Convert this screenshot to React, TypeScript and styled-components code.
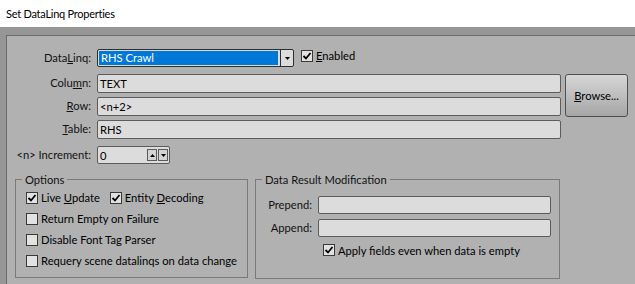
import styled, { createGlobalStyle } from 'styled-components';

const GlobalStyle = createGlobalStyle`
  body {
    margin: 0;
    font-family: Lato, "Liberation Sans", sans-serif;
    font-size: 11.2px;
    color: #000;
  }
`;

const Window = styled.div`
  width: 635px;
  height: 284px;
  display: flex;
  flex-direction: column;
  overflow: hidden;
  background: #fff;
`;

const TitleBar = styled.div`
  height: 27px;
  flex-shrink: 0;
  display: flex;
  align-items: center;
  padding-left: 6px;
  font-size: 11px;
  letter-spacing: -0.25px;
`;

const Frame = styled.div`
  flex: 1;
  display: flex;
  background: #969696;
  padding: 8px 0 0 6px;
`;

const Panel = styled.div`
  flex: 1;
  background: #b1b1b1;
  border-top: 1px solid #6c6c6c;
  border-left: 1px solid #6c6c6c;
  padding-top: 13px;
`;

const Form = styled.div`
  display: grid;
  grid-template-columns: 90px 464px 67px;
  grid-template-rows: 21px 19px 19px 22px 18px;
  row-gap: 4px;
`;

const Label = styled.label`
  text-align: right;
  padding-right: 6px;
  line-height: 18px;
  white-space: nowrap;
  color: #111;
`;

const Key = styled.span`
  text-decoration: underline;
`;

const ComboRow = styled.div`
  display: flex;
  align-items: flex-start;
  gap: 7px;
`;

const Combo = styled.div`
  width: 197px;
  height: 18px;
  box-sizing: border-box;
  border: 1px solid #2e2e2e;
  border-radius: 2px;
  background: #dcdcdc;
  display: flex;
  align-items: stretch;
`;

const Selection = styled.div`
  flex: 1;
  margin: 1px 2px 1px 1px;
  background: #0078d7;
  color: #fff;
  padding-left: 2px;
  line-height: 14px;
`;

const DropButton = styled.div`
  width: 12px;
  border-left: 1px solid #2e2e2e;
  display: flex;
  align-items: center;
  justify-content: center;
`;

const TextBox = styled.div<{ $width?: number; $height?: number }>`
  box-sizing: border-box;
  height: ${(p) => p.$height ?? 19}px;
  width: ${(p) => (p.$width ? `${p.$width}px` : '100%')};
  background: #dcdcdc;
  border: 1px solid #5c5c5c;
  border-radius: 2px;
  padding-left: 2px;
  display: flex;
  align-items: center;
  justify-content: space-between;
`;

const BrowseButton = styled.button`
  grid-column: 3;
  grid-row: 2 / 4;
  margin-left: 4px;
  width: 63px;
  height: 43px;
  font: inherit;
  color: #000;
  border: 1px solid #4f4f4f;
  border-radius: 3px;
  background: linear-gradient(#d6d6d6, #a6a6a6);
  padding: 0;
`;

const Spinner = styled.div`
  display: flex;
  gap: 1px;
  margin-right: 1px;
`;

const SpinButton = styled.div`
  width: 10px;
  height: 12px;
  box-sizing: border-box;
  border: 1px solid #5a5a5a;
  background: #d4d4d4;
  display: flex;
  align-items: center;
  justify-content: center;
`;

const Groups = styled.div`
  display: flex;
  gap: 7px;
  padding-left: 8px;
  margin-top: 8px;
`;

const Group = styled.fieldset<{ $width: number; $height: number }>`
  margin: 0;
  padding: 0;
  box-sizing: border-box;
  width: ${(p) => p.$width}px;
  height: ${(p) => p.$height}px;
  border: 1px solid #7a7a7a;
  min-width: 0;
`;

const Legend = styled.legend`
  margin-left: 6px;
  padding: 0 3px;
  line-height: 15px;
  color: #111;
`;

const OptionList = styled.div`
  padding-left: 10px;
  display: flex;
  flex-direction: column;
`;

const OptionRow = styled.div`
  height: 21px;
  display: flex;
  align-items: center;
  gap: 10px;
`;

const Check = styled.span`
  display: inline-flex;
  align-items: center;
  gap: 3px;
  white-space: nowrap;
`;

const Box = styled.span`
  width: 12px;
  height: 12px;
  box-sizing: border-box;
  border: 1px solid #3a3a3a;
  background: #e2e2e2;
  display: inline-flex;
  align-items: center;
  justify-content: center;
`;

const ModGrid = styled.div`
  display: grid;
  grid-template-columns: 62px 233px;
  grid-auto-rows: 18px;
  row-gap: 5px;
  padding-top: 9px;
`;

const ApplyRow = styled.div`
  grid-column: 2;
  padding-left: 5px;
  display: flex;
  align-items: center;
  height: 18px;
  margin-top: -1px;
`;

const Tick = () => (
  <svg width="10" height="10" viewBox="0 0 10 10">
    <path d="M1.5 5 L4 7.5 L8.5 2" fill="none" stroke="#000" strokeWidth="1.8" />
  </svg>
);

const Arrow = ({ up }: { up?: boolean }) => (
  <svg width="5" height="3" viewBox="0 0 5 3">
    <path d={up ? 'M0 3 L2.5 0 L5 3 Z' : 'M0 0 L5 0 L2.5 3 Z'} fill="#000" />
  </svg>
);

const CheckBox = ({ checked, children }: { checked?: boolean; children: React.ReactNode }) => (
  <Check>
    <Box>{checked && <Tick />}</Box>
    <span>{children}</span>
  </Check>
);

const App = (): JSX.Element => {
  return (
    <Window>
      <GlobalStyle />
      <TitleBar>Set DataLinq Properties</TitleBar>
      <Frame>
        <Panel>
          <Form>
            <Label>Data<Key>L</Key>inq:</Label>
            <ComboRow>
              <Combo>
                <Selection>RHS Crawl</Selection>
                <DropButton><Arrow /></DropButton>
              </Combo>
              <CheckBox checked><Key>E</Key>nabled</CheckBox>
            </ComboRow>
            <div />

            <Label>Colu<Key>m</Key>n:</Label>
            <TextBox>TEXT</TextBox>
            <BrowseButton><Key>B</Key>rowse...</BrowseButton>

            <Label><Key>R</Key>ow:</Label>
            <TextBox>&lt;n+2&gt;</TextBox>

            <Label><Key>T</Key>able:</Label>
            <TextBox>RHS</TextBox>
            <div />

            <Label>&lt;n&gt; Increment:</Label>
            <TextBox $width={73} $height={18}>
              0
              <Spinner>
                <SpinButton><Arrow up /></SpinButton>
                <SpinButton><Arrow /></SpinButton>
              </Spinner>
            </TextBox>
            <div />
          </Form>

          <Groups>
            <Group $width={233} $height={106}>
              <Legend>Options</Legend>
              <OptionList>
                <OptionRow>
                  <CheckBox checked>Live <Key>U</Key>pdate</CheckBox>
                  <CheckBox checked>Entity <Key>D</Key>ecoding</CheckBox>
                </OptionRow>
                <OptionRow><CheckBox>Return Empty on Failure</CheckBox></OptionRow>
                <OptionRow><CheckBox>Disable Font Tag Parser</CheckBox></OptionRow>
                <OptionRow><CheckBox>Requery scene datalinqs on data change</CheckBox></OptionRow>
              </OptionList>
            </Group>
            <Group $width={305} $height={107}>
              <Legend>Data Result Modification</Legend>
              <ModGrid>
                <Label>Prepend:</Label>
                <TextBox $height={18} />
                <Label>Append:</Label>
                <TextBox $height={18} />
                <ApplyRow>
                  <CheckBox checked>Apply fields even when data is empty</CheckBox>
                </ApplyRow>
              </ModGrid>
            </Group>
          </Groups>
        </Panel>
      </Frame>
    </Window>
  );
};

export default App;
